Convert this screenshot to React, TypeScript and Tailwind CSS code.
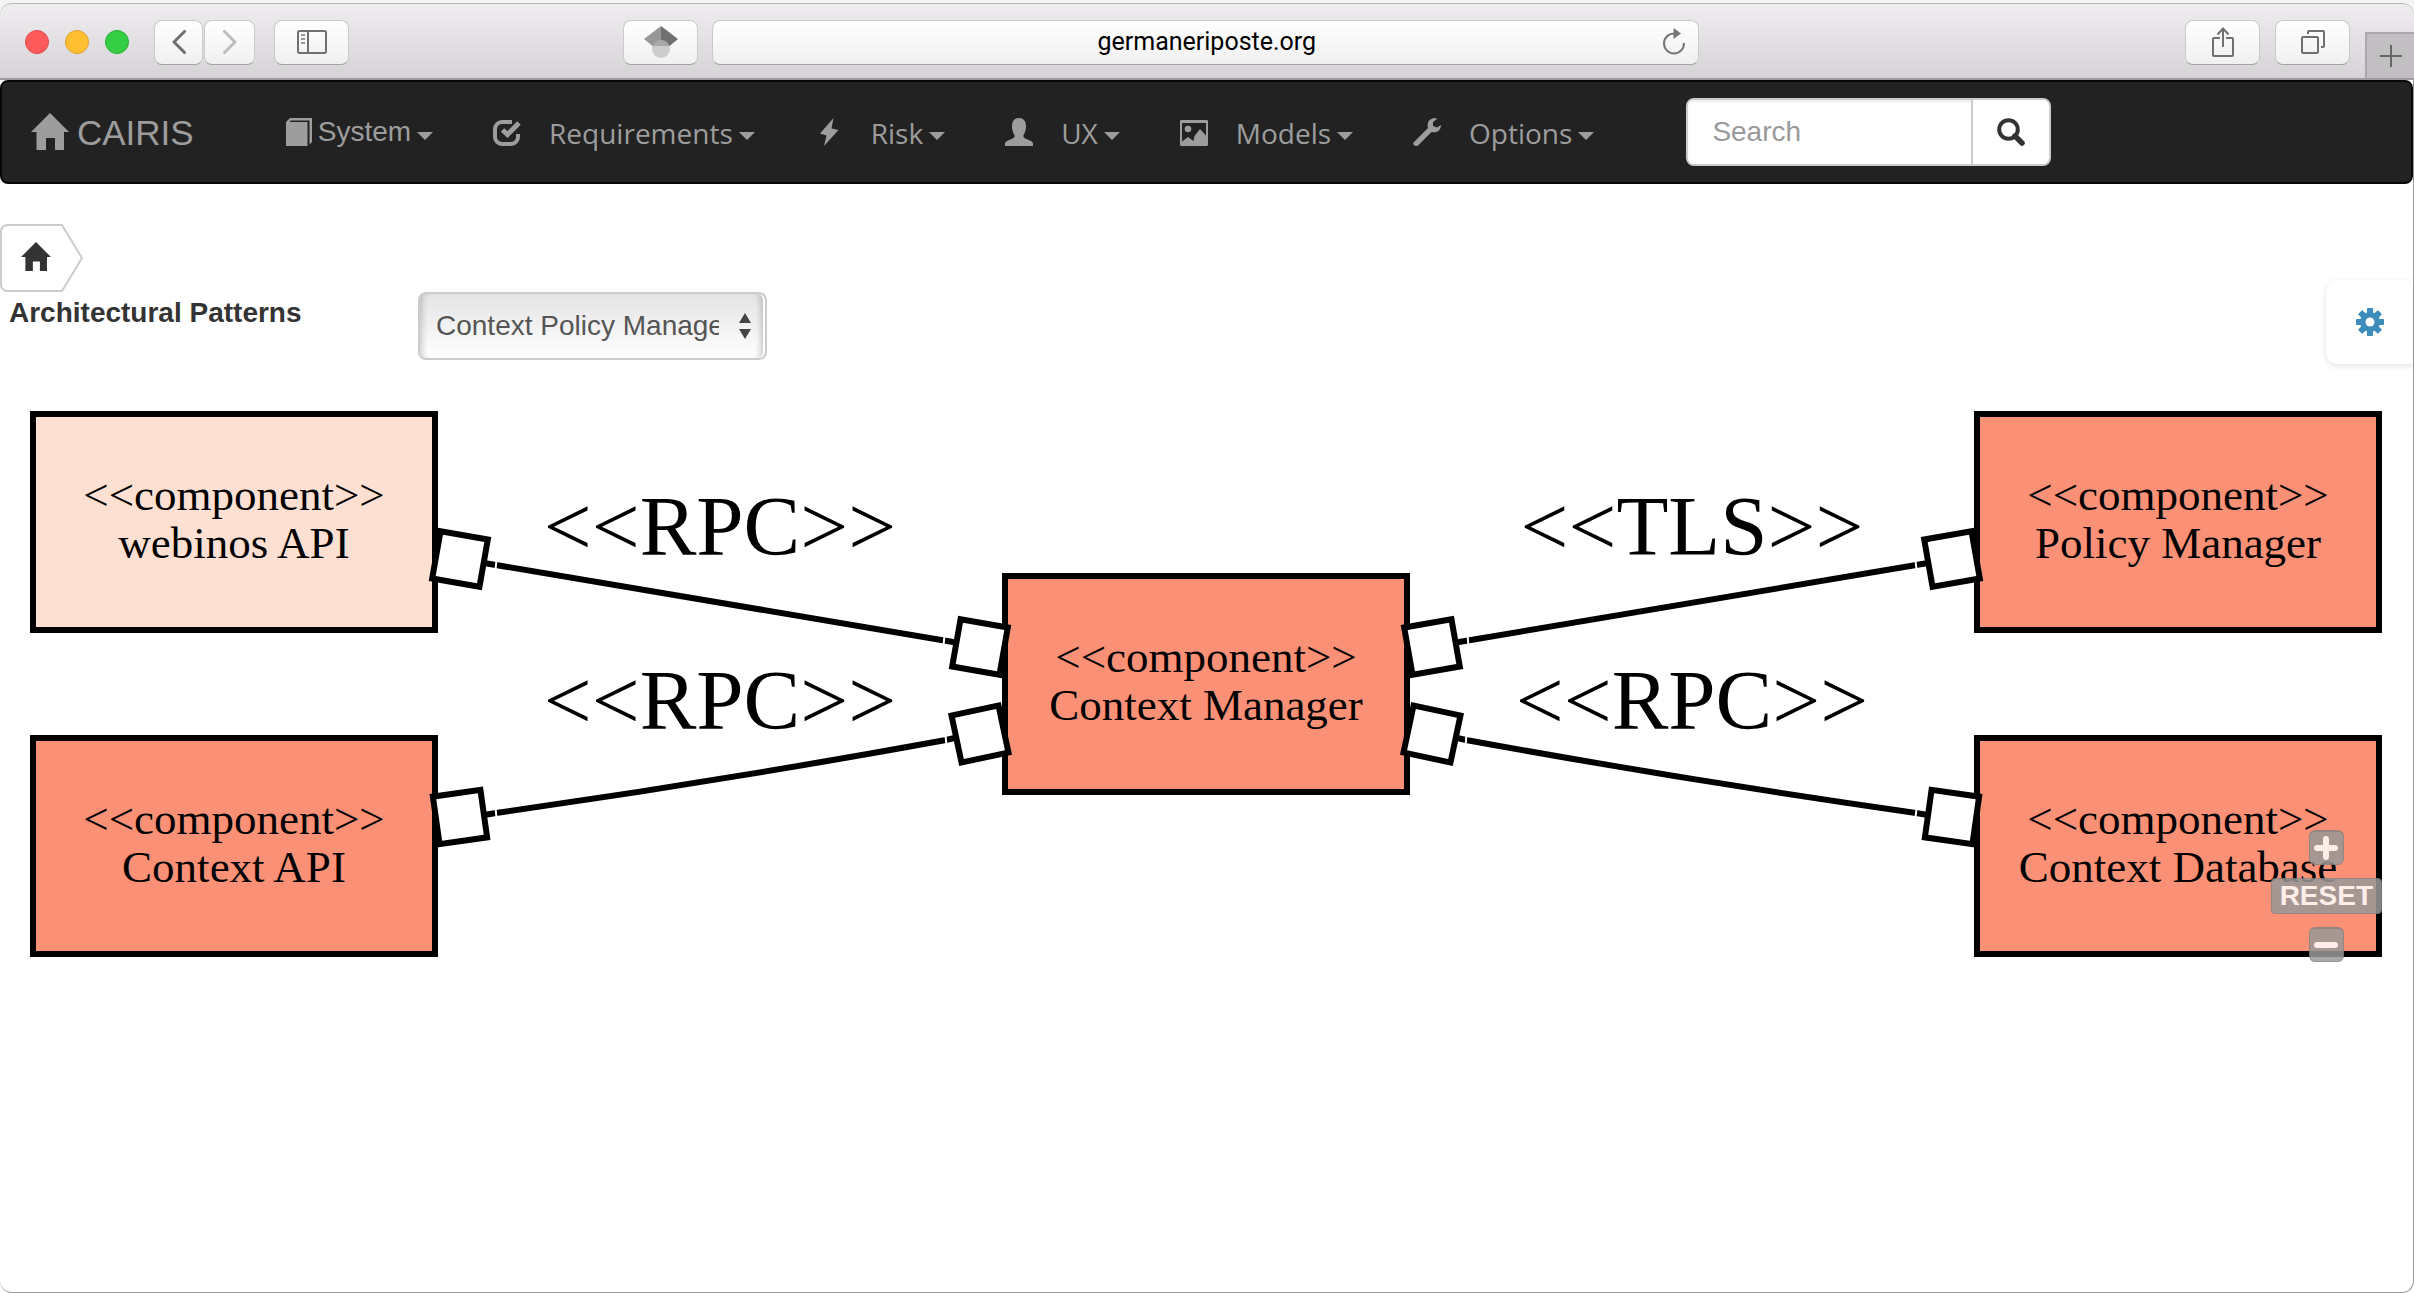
import { useState } from "react";
import type { ReactNode } from "react";

/* ---------- icons ---------- */

function HomeIcon({ className }: { className: string }) {
  return (
    <svg viewBox="0 0 38 37" className={className} fill="currentColor" aria-hidden="true">
      <path d="M19 0 38 19H33V37H24V25H15V37H5.500V19H0Z" />
    </svg>
  );
}

function BookIcon() {
  return (
    <svg viewBox="0 0 28 28" className="size-7" fill="currentColor" aria-hidden="true">
      <path d="M0 4 4 0H26V24L23.500 26.500V2.500H5L3.500 4H21.500V28H0Z" />
    </svg>
  );
}

function CheckIcon() {
  return (
    <svg viewBox="0 0 28 28" className="size-7" fill="none" stroke="currentColor" aria-hidden="true">
      <path d="M19 4H9a7 7 0 0 0-7 7v8a7 7 0 0 0 7 7h9a7 7 0 0 0 7-7v-3" strokeWidth="4" />
      <path d="M9.500 12 14.500 16.500 26 5" strokeWidth="5" />
    </svg>
  );
}

function BoltIcon() {
  return (
    <svg viewBox="0 0 28 28" className="size-7" fill="currentColor" aria-hidden="true">
      <path d="M18.500 0 5 15.500 11.500 17.500 9 28 23.500 12 16.500 10.500Z" />
    </svg>
  );
}

function UserIcon() {
  return (
    <svg viewBox="0 0 28 28" className="size-7" fill="currentColor" aria-hidden="true">
      <path d="M14 0C18.500 0 21 3 21 8C21 12 20 15 18.500 17V19C20 21.500 28 22.500 28 25.500V28H0V25.500C0 22.500 8 21.500 9.500 19V17C8 15 7 12 7 8C7 3 9.500 0 14 0Z" />
    </svg>
  );
}

function PictureIcon() {
  return (
    <svg viewBox="0 0 28 28" className="size-7" fill="currentColor" aria-hidden="true">
      <path fillRule="evenodd" d="M1 2H27L28 3V27L27 28H1L0 27V3ZM2 5V26H26V5Z" />
      <circle cx="8" cy="11" r="3.300" />
      <path d="M1.500 26V24L8 19 13.500 23 14.500 18 20 11 26.500 18V26.500Z" />
    </svg>
  );
}

function WrenchIcon() {
  return (
    <svg viewBox="0 0 28 28" className="size-7" fill="currentColor" aria-hidden="true">
      <path d="M1 24 15 10C13.500 4 17 0 22 0L24 1 20 4V8L24 9.500 28 7C28 12 24 15.500 18.500 14L5 27.500C3.500 28.500 2 28 1 27S0 25 1 24Z" />
    </svg>
  );
}

function SearchIcon() {
  return (
    <svg viewBox="0 0 28 28" className="size-7" fill="none" stroke="currentColor" aria-hidden="true">
      <circle cx="11.500" cy="11.500" r="9.300" strokeWidth="4" />
      <path d="M18 18 25 25" strokeWidth="5.500" strokeLinecap="round" />
    </svg>
  );
}

function GearIcon() {
  return (
    <svg viewBox="0 0 28 28" className="size-7" aria-hidden="true">
      <g fill="currentColor">
        {[0, 45, 90, 135].map((angle) => (
          <rect key={angle} x="11" y="0" width="6" height="28" rx="1" transform={`rotate(${angle} 14 14)`} />
        ))}
        <circle cx="14" cy="14" r="10" />
      </g>
      <circle cx="14" cy="14" r="4.500" fill="#fff" />
    </svg>
  );
}

/* ---------- browser chrome ---------- */

function ToolbarButton({ label, className, children }: { label: string; className: string; children: ReactNode }) {
  return (
    <button
      type="button"
      aria-label={label}
      className={`flex h-[45px] items-center justify-center rounded-lg border border-[#cbc9cb] border-b-[#a5a3a5] bg-linear-to-b from-white to-[#f1f0f1] text-[#707070] ${className}`}
    >
      {children}
    </button>
  );
}

function BrowserBar() {
  return (
    <header className="bg-[#f4f4f4] pt-[3px]">
      <div className="flex h-[77px] items-center rounded-t-xl border-t border-b-2 border-t-[#b8b7b8] border-b-[#9d9b9e] bg-linear-to-b from-[#efedef] to-[#d5d3d5] pt-0.5">
        <div className="flex w-[29.5%] items-center pr-[14px] pl-[25px]">
          <div className="flex gap-4">
            <button type="button" aria-label="Close" className="size-6 rounded-full border border-[#e0484a] bg-[#ff5a5c]" />
            <button type="button" aria-label="Minimise" className="size-6 rounded-full border border-[#e0a02f] bg-[#ffbf30]" />
            <button type="button" aria-label="Full screen" className="size-6 rounded-full border border-[#27ad34] bg-[#35cd43]" />
          </div>
          <div className="ml-[25px] flex gap-px">
            <ToolbarButton label="Back" className="w-[49px]">
              <svg viewBox="0 0 14 24" className="h-6 w-3.5" fill="none" stroke="#6f6f6f" strokeWidth="3" strokeLinecap="round" strokeLinejoin="round">
                <path d="M12.500 1.500 2 12 12.500 22.500" />
              </svg>
            </ToolbarButton>
            <ToolbarButton label="Forward" className="w-[51px]">
              <svg viewBox="0 0 14 24" className="h-6 w-3.5" fill="none" stroke="#bdbdbd" strokeWidth="3" strokeLinecap="round" strokeLinejoin="round">
                <path d="M1.500 1.500 12 12 1.500 22.500" />
              </svg>
            </ToolbarButton>
          </div>
          <ToolbarButton label="Show sidebar" className="ml-[19px] w-[75px]">
            <svg viewBox="0 0 30 24" className="h-6 w-[30px]" fill="none" stroke="currentColor" strokeWidth="2">
              <rect x="1" y="1" width="28" height="22" rx="1.500" />
              <path d="M11 1V23" />
              <path d="M4 5H8M4 9H8M4 13H8" stroke="#999" />
            </svg>
          </ToolbarButton>
          <ToolbarButton label="Scholar" className="ml-auto w-[75px]">
            <svg viewBox="0 0 34 32" className="h-8 w-[34px]">
              <path d="M17 0 0 13 8.500 20H17Z" fill="#979797" />
              <path d="M17 0 34 13 25.500 20H17Z" fill="#707070" />
              <circle cx="17" cy="23" r="9" fill="#c6c6c6" fillOpacity="0.850" />
              <path d="M8.500 20A9 9 0 0 1 25.500 20Z" fill="#9f9f9f" fillOpacity="0.700" />
            </svg>
          </ToolbarButton>
        </div>

        <div className="flex h-[45px] w-[40.9%] items-center rounded-lg border border-[#cbc9cb] border-b-[#a5a3a5] bg-linear-to-b from-white to-[#f1f0f1] pr-3 pl-[38px]">
          <input
            type="text"
            aria-label="Address"
            defaultValue="germaneriposte.org"
            className="min-w-0 flex-1 bg-transparent text-center font-['Roboto',sans-serif] text-[25px] leading-8 text-black outline-none"
          />
          <button type="button" aria-label="Reload">
            <svg viewBox="0 0 24 28" className="h-7 w-6" fill="none" stroke="#757575" strokeWidth="2">
              <path d="M13 5.500A10 10 0 1 0 22 15" />
              <path d="M11.500 0 19 5.500 11.500 11Z" fill="#757575" stroke="none" />
            </svg>
          </button>
        </div>

        <div className="flex flex-1 items-center justify-end gap-[15px] self-stretch">
          <ToolbarButton label="Share" className="w-[75px]">
            <svg viewBox="0 0 22 30" className="h-[30px] w-[22px]" fill="none" stroke="currentColor" strokeWidth="2">
              <path d="M8 11H2Q1 11 1 12V28Q1 29 2 29H20Q21 29 21 28V12Q21 11 20 11H14" />
              <path d="M11 20V2M5.500 7.500 11 1.500 16.500 7.500" />
            </svg>
          </ToolbarButton>
          <ToolbarButton label="Show all tabs" className="w-[75px]">
            <svg viewBox="0 0 24 24" className="size-6" fill="none" stroke="currentColor" strokeWidth="2">
              <rect x="1" y="7" width="16" height="16" rx="1" />
              <path d="M7 4V2Q7 1 8 1H22Q23 1 23 2V16Q23 17 22 17H20" />
            </svg>
          </ToolbarButton>
          <button type="button" aria-label="New tab" className="flex h-[46px] w-[49px] items-center justify-center self-end border-t-2 border-l-2 border-[#a9a7aa] bg-[#c1bfc1] text-[#666]">
            <svg viewBox="0 0 22 22" className="size-[22px]" stroke="currentColor" strokeWidth="2">
              <path d="M11 0V22M0 11H22" />
            </svg>
          </button>
        </div>
      </div>
    </header>
  );
}

/* ---------- application navigation ---------- */

const menus = [
  { label: "Requirements", icon: <CheckIcon /> },
  { label: "Risk", icon: <BoltIcon /> },
  { label: "UX", icon: <UserIcon /> },
  { label: "Models", icon: <PictureIcon /> },
  { label: "Options", icon: <WrenchIcon /> },
];

function Caret() {
  return (
    <svg viewBox="0 0 16 8" className="mt-2 ml-1.5 h-2 w-4" fill="currentColor" aria-hidden="true">
      <path d="M0 0H16L8 8Z" />
    </svg>
  );
}

function NavBar() {
  return (
    <nav className="flex h-[104px] items-center rounded-lg border-2 border-[#080808] bg-[#222] pl-[29px] text-[28px] leading-10 text-[#9d9d9d]">
      <a href="#home" className="flex items-center gap-2 pt-0.5 text-[35px]">
        <HomeIcon className="mb-1 h-[37px] w-[38px]" />
        CAIRIS
      </a>
      <ul className="ml-[92px] flex items-center gap-[60px]">
        <li>
          <button type="button" className="flex items-center">
            <BookIcon />
            <span className="ml-1">System</span>
            <Caret />
          </button>
        </li>
        {menus.map((menu) => (
          <li key={menu.label}>
            <button type="button" className="flex items-center">
              {menu.icon}
              <span className="ml-7 pt-0.5 font-['Open_Sans',sans-serif]">{menu.label}</span>
              <Caret />
            </button>
          </li>
        ))}
      </ul>
      <form className="ml-[92px] flex h-[68px] overflow-hidden rounded-lg border-2 border-[#ccc] bg-white" onSubmit={(e) => e.preventDefault()}>
        <input
          type="text"
          aria-label="Search"
          placeholder="Search"
          className="w-[283px] bg-white px-6 text-[28px] text-[#555] shadow-[inset_0_2px_2px_rgba(0,0,0,0.075)] outline-none placeholder:text-[#999]"
        />
        <button type="submit" aria-label="Submit search" className="flex w-[78px] items-center justify-center border-l-2 border-[#ccc] text-[#333]">
          <SearchIcon />
        </button>
      </form>
    </nav>
  );
}

/* ---------- component diagram ---------- */

function ComponentNode({ x, y, name, fill }: { x: number; y: number; name: string; fill: string }) {
  return (
    <g>
      <rect x={x + 3} y={y + 3} width="402" height="216" fill={fill} stroke="#000" strokeWidth="6" />
      <text x={x + 204} y={y + 99} fontSize="45" textAnchor="middle">
        {"<<component>>"}
      </text>
      <text x={x + 204} y={y + 147} fontSize="45" textAnchor="middle">
        {name}
      </text>
    </g>
  );
}

function Port({ x, y, angle }: { x: number; y: number; angle: number }) {
  return (
    <rect x={x - 24} y={y - 24} width="48" height="48" fill="#fff" stroke="#000" strokeWidth="6" transform={`rotate(${angle} ${x} ${y})`} />
  );
}

/* Both connectors that join the outer components to the central one. */
function Connectors() {
  return (
    <g>
      <path d="M484 203 959 283" fill="none" stroke="#000" strokeWidth="6" />
      <path d="M484 455 496 453Q721 421 946 380L959 377" fill="none" stroke="#000" strokeWidth="6" />
      <path d="M496.500 200 495.500 210M944.500 275 943.500 286M495.500 448 496.500 458M945.500 375 946.500 386" stroke="#fff" strokeWidth="2" />
      <Port x={460} y={199} angle={10} />
      <Port x={980} y={287} angle={10} />
      <Port x={460} y={457} angle={-8} />
      <Port x={980} y={374} angle={-12} />
    </g>
  );
}

function Diagram() {
  return (
    <svg viewBox="0 0 2413 640" className="block w-full font-['Liberation_Serif',serif]" role="img" aria-label="Component diagram">
      <ComponentNode x={30} y={51} name="webinos API" fill="#fee0d2" />
      <ComponentNode x={30} y={375} name="Context API" fill="#fa9176" />
      <ComponentNode x={1002} y={213} name="Context Manager" fill="#fa9176" />
      <ComponentNode x={1974} y={51} name="Policy Manager" fill="#fa9176" />
      <ComponentNode x={1974} y={375} name="Context Database" fill="#fa9176" />
      <Connectors />
      <g transform="matrix(-1 0 0 1 2412 0)">
        <Connectors />
      </g>
      <g fontSize="85" textAnchor="middle">
        <text x="720" y="195">{"<<RPC>>"}</text>
        <text x="720" y="369">{"<<RPC>>"}</text>
        <text x="1692" y="195">{"<<TLS>>"}</text>
        <text x="1692" y="369">{"<<RPC>>"}</text>
      </g>
    </svg>
  );
}

function ZoomControls() {
  return (
    <div className="absolute top-[470px] right-[31px] flex flex-col items-center gap-[13px] opacity-85">
      <button type="button" aria-label="Zoom in" className="flex size-[35px] items-center justify-center rounded-md border border-t-2 border-[#848484] bg-[#999]">
        <svg viewBox="0 0 24 24" className="size-6" stroke="#fff" strokeWidth="6" strokeLinecap="round">
          <path d="M12 3V21M3 12H21" />
        </svg>
      </button>
      <button type="button" className="flex h-9 items-center rounded-sm border border-[#848484] bg-[#999] px-2 text-[28px] leading-8 font-bold text-white">
        RESET
      </button>
      <button type="button" aria-label="Zoom out" className="flex size-[35px] items-center justify-center rounded-md border border-t-2 border-[#848484] bg-[#999]">
        <svg viewBox="0 0 24 24" className="size-6" stroke="#fff" strokeWidth="6" strokeLinecap="round">
          <path d="M3 12H21" />
        </svg>
      </button>
    </div>
  );
}

export default function App() {
  const [pattern, setPattern] = useState("Context Policy Management");

  return (
    <div className="flex min-h-screen flex-col bg-white font-['Liberation_Sans',Arial,sans-serif]">
      <BrowserBar />
      <div className="relative flex-1 rounded-b-xl border-r border-b border-[#999]">
        <NavBar />

        <a href="#home" aria-label="Home" className="relative mt-10 flex h-[68px] w-[84px] items-center pb-1 pl-[21px] text-[#333]">
          <svg viewBox="0 0 84 68" className="absolute inset-0 h-[68px] w-[84px]" fill="#fff" stroke="#ccc" strokeWidth="2" aria-hidden="true">
            <path d="M62 1H8Q1 1 1 8V60Q1 67 8 67H62L82 34Z" />
          </svg>
          <HomeIcon className="relative h-[29px] w-[30px]" />
        </a>

        <main>
          <div className="flex items-start pl-[9px]">
            <label htmlFor="pattern" className="w-[409px] text-[28px] leading-[42px] font-bold text-[#333]">
              Architectural Patterns
            </label>
            <div className="relative">
              <select
                id="pattern"
                value={pattern}
                onChange={(e) => setPattern(e.target.value)}
                className="h-[68px] w-[349px] appearance-none rounded-lg border-2 border-[#ccc] bg-linear-to-b from-[#e4e4e4] to-white pr-[46px] pl-4 text-[28px] text-[#555] shadow-[inset_8px_0_6px_-6px_rgba(0,0,0,0.2),inset_-2px_0_0_#fff,inset_-10px_0_6px_-6px_rgba(0,0,0,0.22)] outline-none"
              >
                <option>Context Policy Management</option>
              </select>
              <svg viewBox="0 0 14 26" className="pointer-events-none absolute top-[21px] right-[15px] h-[26px] w-3.5" fill="#444" aria-hidden="true">
                <path d="M7 0 13 10H1ZM7 26 13 16H1Z" />
              </svg>
            </div>
          </div>
          <div className="relative">
            <Diagram />
            <ZoomControls />
          </div>
        </main>

        <button type="button" aria-label="Settings" className="absolute top-[200px] right-0 flex h-[84px] w-[87px] items-center justify-center rounded-l-xl bg-white text-[#3c8dbc] shadow-[0_2px_6px_rgba(0,0,0,0.12)]">
          <GearIcon />
        </button>
      </div>
    </div>
  );
}
